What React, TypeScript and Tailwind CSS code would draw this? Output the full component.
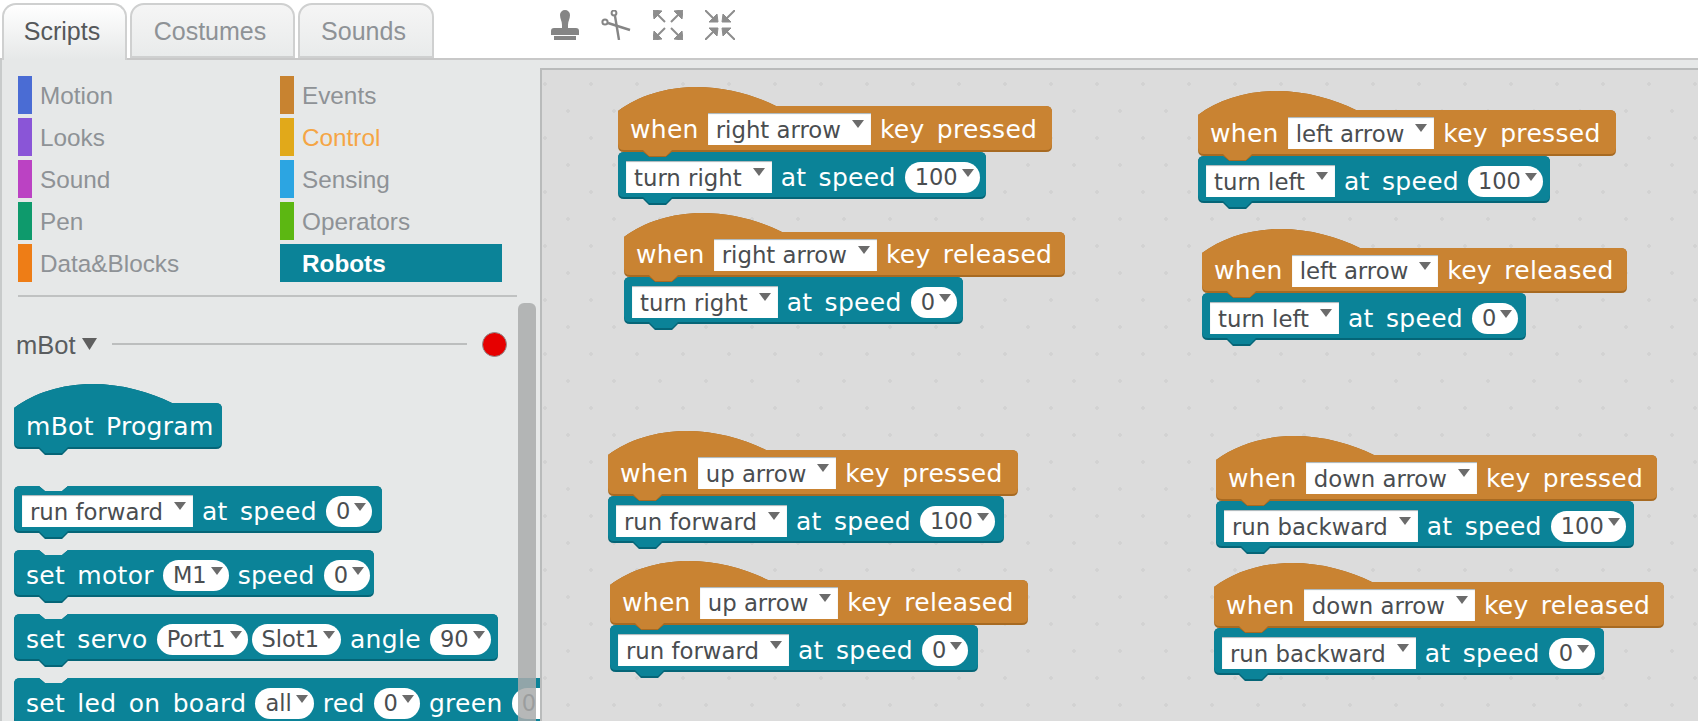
import React from 'react';

type Token =
  | string
  | { field: string }
  | { pill: string; tight?: boolean };

interface Script {
  x: number;
  y: number;
  hatWidth: number;
  stackWidth: number;
  hatHeight: number;
  arrow: string;
  event: string;
  action: string;
  speed: string;
}

const leftCategories = [
  { label: 'Motion', color: 'bg-[#4a6cd4]' },
  { label: 'Looks', color: 'bg-[#8a55d7]' },
  { label: 'Sound', color: 'bg-[#bb42c3]' },
  { label: 'Pen', color: 'bg-[#0e9a6c]' },
  { label: 'Data&Blocks', color: 'bg-[#ee7d16]' },
];

const rightCategories = [
  { label: 'Events', color: 'bg-[#c88330]', text: 'text-[#8e9296]' },
  { label: 'Control', color: 'bg-[#e1a91a]', text: 'text-[#f5a544]' },
  { label: 'Sensing', color: 'bg-[#2ca5e2]', text: 'text-[#8e9296]' },
  { label: 'Operators', color: 'bg-[#5cb712]', text: 'text-[#8e9296]' },
];

// Positions on the script canvas, relative to its top left corner
const scripts: Script[] = [
  { x: 76, y: 17, hatWidth: 434, stackWidth: 368, hatHeight: 65, arrow: 'right arrow', event: 'key pressed', action: 'turn right', speed: '100' },
  { x: 82, y: 143, hatWidth: 441, stackWidth: 339, hatHeight: 64, arrow: 'right arrow', event: 'key released', action: 'turn right', speed: '0' },
  { x: 656, y: 21, hatWidth: 418, stackWidth: 352, hatHeight: 65, arrow: 'left arrow', event: 'key pressed', action: 'turn left', speed: '100' },
  { x: 660, y: 159, hatWidth: 425, stackWidth: 324, hatHeight: 64, arrow: 'left arrow', event: 'key released', action: 'turn left', speed: '0' },
  { x: 66, y: 361, hatWidth: 410, stackWidth: 396, hatHeight: 65, arrow: 'up arrow', event: 'key pressed', action: 'run forward', speed: '100' },
  { x: 68, y: 491, hatWidth: 418, stackWidth: 368, hatHeight: 64, arrow: 'up arrow', event: 'key released', action: 'run forward', speed: '0' },
  { x: 674, y: 366, hatWidth: 441, stackWidth: 418, hatHeight: 65, arrow: 'down arrow', event: 'key pressed', action: 'run backward', speed: '100' },
  { x: 672, y: 493, hatWidth: 450, stackWidth: 390, hatHeight: 65, arrow: 'down arrow', event: 'key released', action: 'run backward', speed: '0' },
];

const TEAL = '#0b8398';
const TEAL_DARK = '#056577';
const ORANGE = '#c98332';
const ORANGE_DARK = '#a76a22';

const stackPath = (w: number, h: number) =>
  `M0 6 Q0 0 6 0 L25 0 L31 5 L48 5 L54 0 L${w - 6} 0 Q${w} 0 ${w} 6 L${w} ${h - 6} Q${w} ${h} ${w - 6} ${h} L54 ${h} L48 ${h + 6} L31 ${h + 6} L25 ${h} L6 ${h} Q0 ${h} 0 ${h - 6} Z`;

const hatPath = (w: number, h: number) =>
  `M0 24 C20 9 48 0 78 0 C108 0 136 8 158 19 L${w - 6} 19 Q${w} 19 ${w} 25 L${w} ${h - 6} Q${w} ${h} ${w - 6} ${h} L54 ${h} L48 ${h + 6} L31 ${h + 6} L25 ${h} L6 ${h} Q0 ${h} 0 ${h - 6} Z`;

const Caret = () => (
  <svg width="12" height="8" viewBox="0 0 12 8" className="shrink-0 self-start mt-[5px]">
    <polygon points="0,0 12,0 6,8" fill="#6b6b6b" />
  </svg>
);

const TokenView = ({ token }: { token: Token }) => {
  if (typeof token === 'string') {
    return (
      <span className="text-white font-['DejaVu_Sans',sans-serif] text-[25px] leading-none whitespace-nowrap tracking-[0.3px] [word-spacing:4px]">
        {token}
      </span>
    );
  }
  if ('field' in token) {
    return (
      <span className="flex h-[32px] shrink-0 items-center gap-[11px] bg-white pl-[8px] pr-[7px] pt-[2px] font-['DejaVu_Sans',sans-serif] text-[22.8px] text-[#4a4d50] whitespace-nowrap shadow-[inset_0_1px_1px_#a9b4b8]">
        {token.field}
        <Caret />
      </span>
    );
  }
  return (
    <span
      className={`flex h-[31px] shrink-0 items-center gap-[4px] rounded-full bg-white pl-[10px] pr-[6px] pt-[2px] font-['DejaVu_Sans',sans-serif] text-[22.5px] text-[#4a4d50] whitespace-nowrap ${
        token.tight ? 'ml-[-5px]' : ''
      }`}
    >
      {token.pill}
      <Caret />
    </span>
  );
};

const StackBlock = ({ width, tokens }: { width: number; tokens: Token[] }) => (
  <div className="relative h-[47px]" style={{ width }}>
    <svg width={width} height={54} className="absolute left-0 top-0 overflow-visible">
      <path d={stackPath(width, 47)} fill={TEAL_DARK} />
      <path d={stackPath(width, 45)} fill={TEAL} />
    </svg>
    <div className={`relative flex h-[47px] items-center gap-[9px] pt-[3px] ${typeof tokens[0] === 'string' ? 'pl-[12px]' : 'pl-[8px]'}`}>
      {tokens.map((token, i) => (
        <TokenView key={i} token={token} />
      ))}
    </div>
  </div>
);

const HatBlock = ({
  width,
  height,
  tokens,
  color = ORANGE,
  dark = ORANGE_DARK,
}: {
  width: number;
  height: number;
  tokens: Token[];
  color?: string;
  dark?: string;
}) => (
  <div className="relative" style={{ width, height }}>
    <svg width={width} height={height + 6} className="absolute left-0 top-0 overflow-visible">
      <path d={hatPath(width, height)} fill={dark} />
      <path d={hatPath(width, height - 2)} fill={color} />
    </svg>
    <div className="relative flex items-center gap-[9px] pl-[12px] pt-[19px]" style={{ height }}>
      {tokens.map((token, i) => (
        <TokenView key={i} token={token} />
      ))}
    </div>
  </div>
);

const StampIcon = () => (
  <svg width="28" height="30" viewBox="0 0 28 30" fill="#858585">
    <path d="M14 0a5 5 0 0 1 5 5c0 4-2 6-2 10v3h8a3 3 0 0 1 3 3v4H0v-4a3 3 0 0 1 3-3h8v-3c0-4-2-6-2-10a5 5 0 0 1 5-5z" />
    <rect x="3" y="26" width="22" height="4" />
  </svg>
);

const ScissorsIcon = () => (
  <svg width="30" height="30" viewBox="0 0 30 30" fill="none" stroke="#858585" strokeWidth="2">
    <circle cx="13" cy="3" r="2.4" />
    <circle cx="4" cy="12" r="2.6" />
    <path d="M14 6l4 24" strokeWidth="2.4" />
    <path d="M7 13l22 7" strokeWidth="2.4" />
  </svg>
);

const ExpandIcon = () => (
  <svg width="30" height="30" viewBox="0 0 30 30" fill="#8d8d8d" stroke="#8d8d8d">
    <polygon points="0,0 9,1 1,9" />
    <polygon points="30,0 21,1 29,9" />
    <polygon points="0,30 9,29 1,21" />
    <polygon points="30,30 21,29 29,21" />
    <path d="M4 4l8 8M26 4l-8 8M4 26l8-8M26 26l-8-8" fill="none" strokeWidth="2" />
  </svg>
);

const ShrinkIcon = () => (
  <svg width="30" height="30" viewBox="0 0 30 30" fill="#8d8d8d" stroke="#8d8d8d">
    <polygon points="13,12 4,12 12,4" />
    <polygon points="17,12 26,12 18,4" />
    <polygon points="13,18 4,18 12,26" />
    <polygon points="17,18 26,18 18,26" />
    <path d="M0 0l8 8M30 0l-8 8M0 30l8-8M30 30l-8-8" fill="none" strokeWidth="2" />
  </svg>
);

const Tab = ({ label, active, width }: { label: string; active?: boolean; width: string }) => (
  <div
    className={`flex items-center justify-center rounded-t-[14px] border-2 border-[#cfd0d0] pr-[5px] text-[25px] ${width} ${
      active
        ? 'relative z-10 mb-[-2px] h-[57px] border-b-0 bg-gradient-to-b from-white to-[#e6e8e8] pb-[2px] text-[#55585a]'
        : 'h-[55px] bg-gradient-to-b from-[#f5f5f5] to-[#e9ebeb] pt-[2px] text-[#8e9296]'
    }`}
  >
    {label}
  </div>
);

const CategoryRow = ({ label, color, text = 'text-[#8e9296]' }: { label: string; color: string; text?: string }) => (
  <div className="flex h-[38px] items-center">
    <div className={`h-full w-[14px] ${color}`} />
    <span className={`ml-[8px] pt-[2px] text-[24.3px] ${text}`}>{label}</span>
  </div>
);

export default function App() {
  return (
    <div className="h-[721px] w-[1698px] overflow-hidden bg-white font-['Liberation_Sans',sans-serif]">
      {/* Tabs and sprite tools */}
      <div className="flex h-[60px] items-end border-b-2 border-[#c8c8c8]">
        <div className="ml-[2px] flex gap-[3px]">
          <Tab label="Scripts" active width="w-[125px]" />
          <Tab label="Costumes" width="w-[165px]" />
          <Tab label="Sounds" width="w-[136px]" />
        </div>
        <div className="ml-[117px] flex gap-[22px] self-start pt-[10px]">
          <StampIcon />
          <ScissorsIcon />
          <ExpandIcon />
          <ShrinkIcon />
        </div>
      </div>

      <div className="flex h-[661px] bg-[#e6e8e8]">
        {/* Block palette */}
        <div className="relative h-full w-[540px] shrink-0 overflow-hidden border-l-2 border-[#c8cbcb] pl-[12px] pt-[16px]">
          <div className="ml-[4px] grid w-[484px] grid-cols-[262px_222px] gap-y-[4px]">
            {leftCategories.map((cat, i) => (
              <React.Fragment key={cat.label}>
                <CategoryRow label={cat.label} color={cat.color} />
                {i < 4 ? (
                  <CategoryRow label={rightCategories[i].label} color={rightCategories[i].color} text={rightCategories[i].text} />
                ) : (
                  <div className="flex h-[38px] items-center bg-[#0b8398] pl-[22px] pt-[2px] text-[24.3px] font-bold text-white">Robots</div>
                )}
              </React.Fragment>
            ))}
          </div>
          <div className="ml-[4px] mt-[13px] h-[2px] w-[499px] bg-[#c0c2c2]" />

          <div className="ml-[2px] mt-[34px] flex h-[26px] w-[491px] items-center">
            <span className="pt-[3px] text-[25.5px] text-[#5a5d5f]">mBot</span>
            <svg width="15" height="12" viewBox="0 0 15 12" className="ml-[6px]">
              <polygon points="0,0 15,0 7.5,12" fill="#5f5f5f" />
            </svg>
            <div className="mx-[15px] h-[2px] flex-1 bg-[#bcbebe]" />
            <div className="h-[25px] w-[25px] rounded-full border border-[#8f8f8f] bg-[#e60000]" />
          </div>

          <div className="mt-[27px] flex flex-col gap-[17px]">
            <div className="mb-[20px]">
              <HatBlock width={208} height={65} tokens={['mBot Program']} color={TEAL} dark={TEAL_DARK} />
            </div>
            <StackBlock width={368} tokens={[{ field: 'run forward' }, 'at speed', { pill: '0' }]} />
            <StackBlock width={360} tokens={['set motor', { pill: 'M1' }, 'speed', { pill: '0' }]} />
            <StackBlock
              width={484}
              tokens={['set servo', { pill: 'Port1' }, { pill: 'Slot1', tight: true }, 'angle', { pill: '90' }]}
            />
            <StackBlock width={600} tokens={['set led on board', { pill: 'all' }, 'red', { pill: '0' }, 'green', { pill: '0' }]} />
          </div>

          {/* Palette scrollbar */}
          <div className="absolute bottom-0 left-[516px] top-[243px] w-[18px] rounded-t-[6px] bg-[#a9abab]/85" />
        </div>

        {/* Script canvas */}
        <div className="mt-[8px] flex-1 border-l-2 border-t-2 border-[#b9bbbb] bg-[#dcdcdc] bg-[radial-gradient(circle,#d2d2d2_1.5px,transparent_2px),radial-gradient(circle,#d2d2d2_1.5px,transparent_2px)] bg-[length:46px_54px] bg-[position:-20px_-13px,3px_14px]">
          <div className="relative h-full w-full">
            {scripts.map((s) => (
              <div key={`${s.arrow}-${s.event}`} className="absolute flex flex-col" style={{ left: s.x, top: s.y }}>
                <HatBlock width={s.hatWidth} height={s.hatHeight} tokens={['when', { field: s.arrow }, s.event]} />
                <StackBlock width={s.stackWidth} tokens={[{ field: s.action }, 'at speed', { pill: s.speed }]} />
              </div>
            ))}
          </div>
        </div>
      </div>
    </div>
  );
}
